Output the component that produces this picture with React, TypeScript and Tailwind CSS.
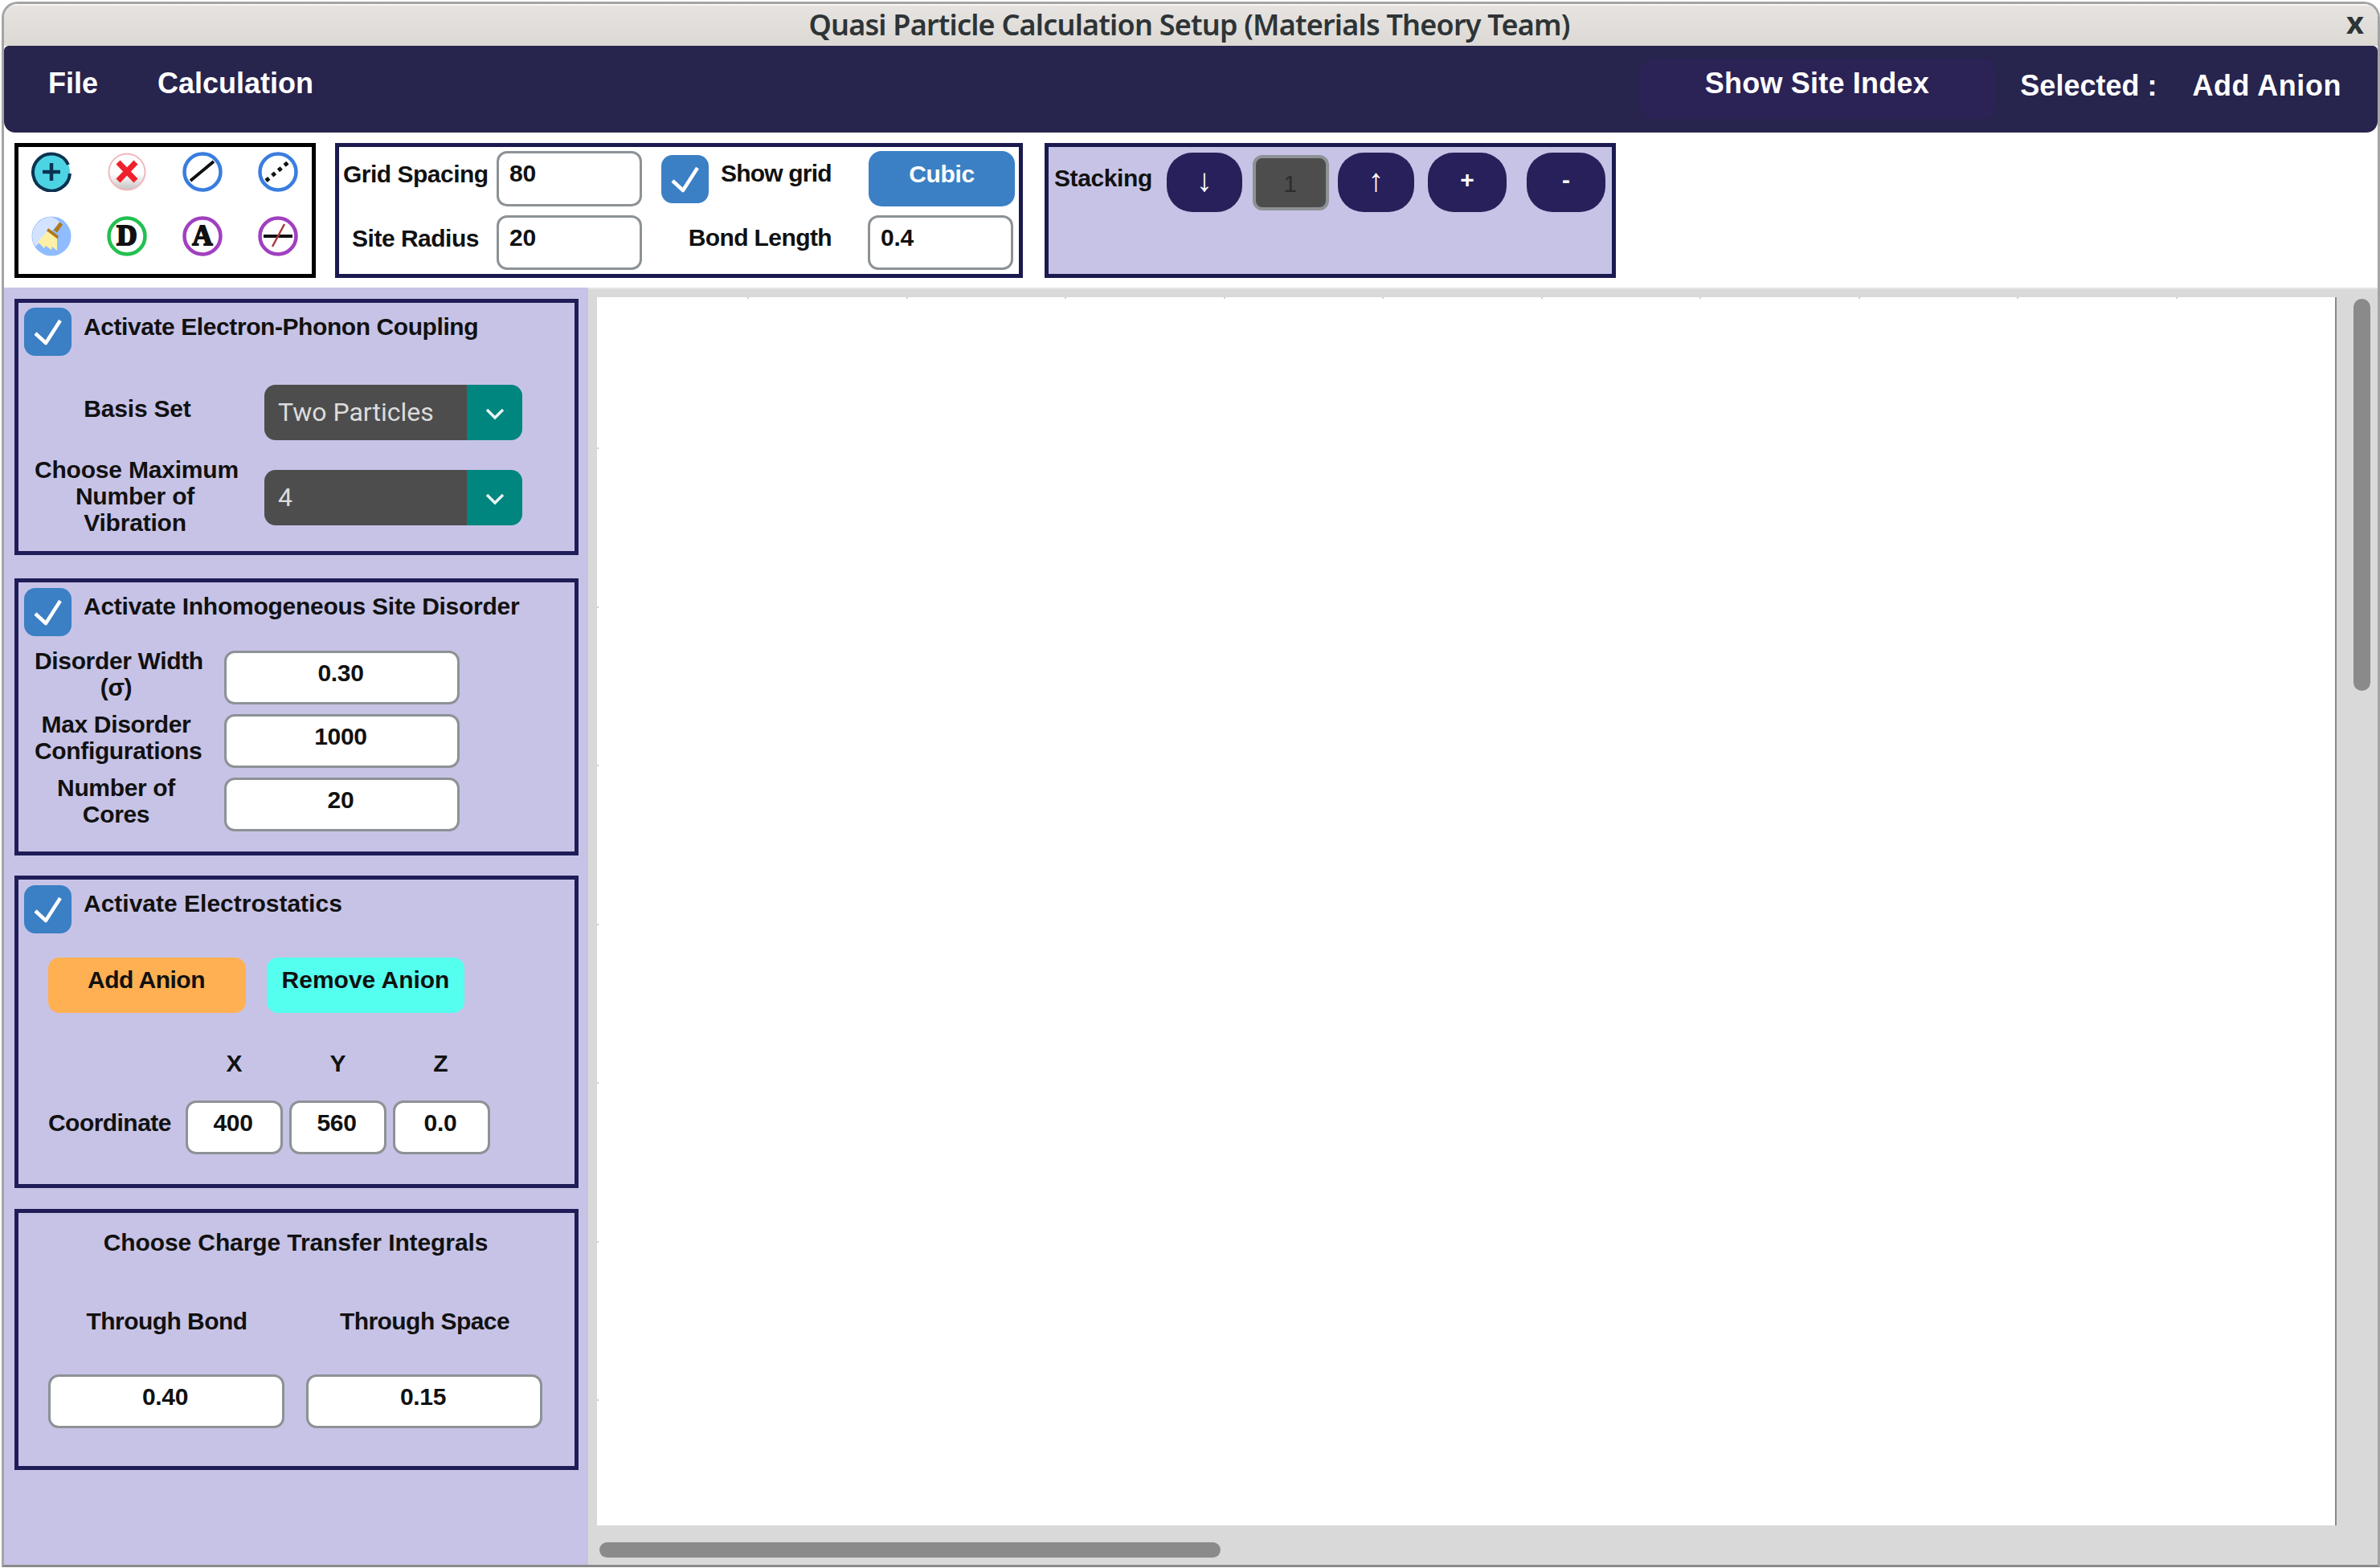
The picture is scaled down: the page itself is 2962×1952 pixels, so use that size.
import React from "react";

const SANS = "font-['Liberation_Sans',Arial,sans-serif]";
const label = "text-[30px] leading-[33px] font-bold text-[#111111] " + SANS;

function Check() {
  return (
    <div className="w-[59px] h-[60px] shrink-0 rounded-[14px] bg-[#3b7fc4] flex items-center justify-center">
      <svg width="59" height="60" viewBox="0 0 59 60">
        <path d="M14 32 L27 44 L45 16" fill="none" stroke="white" strokeWidth="4.5" strokeLinejoin="round" />
      </svg>
    </div>
  );
}

function Field({ value, w, h = "h-[67px]", align = "center" }: { value: string; w: string; h?: string; align?: string }) {
  return (
    <div
      className={
        w + " " + h +
        " shrink-0 bg-white border-[3px] border-[#8c9295] rounded-[13px] pt-[8px] text-[30px] leading-[33px] font-bold text-[#111111] tracking-[-0.3px] " +
        SANS + " " + (align === "center" ? "text-center pr-[3px]" : "text-left pl-[13px]")
      }
    >
      {value}
    </div>
  );
}

function Chevron() {
  return (
    <svg width="24" height="16" viewBox="0 0 24 16">
      <path d="M2 3 L12 13 L22 3" fill="none" stroke="#e8f4f2" strokeWidth="3.5" />
    </svg>
  );
}

function Select({ value }: { value: string }) {
  return (
    <div className="w-[321px] h-[69px] shrink-0 rounded-[14px] overflow-hidden flex">
      <div className="w-[252px] bg-[#4d4d4d] pl-[17px] text-[32px] leading-[68px] text-[#dcdcdc] font-['Roboto',sans-serif]">{value}</div>
      <div className="w-[69px] bg-[#00857f] flex items-center justify-center pt-[3px]">
        <Chevron />
      </div>
    </div>
  );
}

function Ring({ color, children }: { color: string; children: React.ReactNode }) {
  return (
    <svg width="50" height="50" viewBox="0 0 50 50">
      <circle cx="25" cy="25" r="22.5" fill="white" stroke={color} strokeWidth="4.5" />
      {children}
    </svg>
  );
}

function Icons() {
  return (
    <div className="grid grid-cols-4 w-fit gap-x-[44px] gap-y-[30px] pl-[16px] pt-[6px]">
      <svg width="50" height="50" viewBox="0 0 50 50">
        <circle cx="25" cy="25" r="23" fill="#4dd4e4" />
        <path d="M46 16 A 23 23 0 1 0 48 27" fill="none" stroke="#0b3350" strokeWidth="4" />
        <path d="M25 14 V36 M14 25 H36" stroke="#0b3350" strokeWidth="4.5" />
      </svg>
      <svg width="50" height="50" viewBox="0 0 50 50">
        <defs>
          <linearGradient id="gl" x1="0" y1="0" x2="0" y2="1">
            <stop offset="0.55" stopColor="#ffffff" />
            <stop offset="1" stopColor="#c4c0c0" />
          </linearGradient>
        </defs>
        <circle cx="25" cy="25" r="22.5" fill="url(#gl)" stroke="#f0b8bc" strokeWidth="2" />
        <path d="M14 13 L36 36 M36 13 L14 36" stroke="#f0202c" strokeWidth="7" />
      </svg>
      <Ring color="#3a7de0">
        <path d="M10 36 L39 12" stroke="#111" strokeWidth="4" />
      </Ring>
      <Ring color="#3a7de0">
        <path d="M10 36 L39 12" stroke="#111" strokeWidth="5" strokeDasharray="5 5" />
      </Ring>
      <svg width="50" height="50" viewBox="0 0 50 50">
        <circle cx="25" cy="25" r="24.5" fill="#8fbcff" />
        <path d="M25 1 A24 24 0 0 0 5 38 L36 8 A24 24 0 0 0 25 1" fill="#d3e2ff" />
        <path d="M30 19 L37 9" stroke="#b07818" strokeWidth="5" />
        <path d="M21 15 L34 25 L32 29 L19 19 Z" fill="#b07818" />
        <path d="M20 19 L32 28 L32 43 L26 38 L25 42 L18 37 L16 40 L8 32 Z" fill="#fff0a8" />
      </svg>
      <Ring color="#22c050">
        <text x="25" y="36" textAnchor="middle" fontSize="35" fontWeight="900" stroke="#111" strokeWidth="2.2" fill="#111" fontFamily="'Liberation Serif',serif">D</text>
      </Ring>
      <Ring color="#a040c0">
        <text x="25" y="36" textAnchor="middle" fontSize="35" fontWeight="900" stroke="#111" strokeWidth="1.8" fill="#111" fontFamily="'Liberation Serif',serif">A</text>
      </Ring>
      <Ring color="#a040c0">
        <path d="M7 25 H43" stroke="#111" strokeWidth="4" />
        <path d="M18 38 L33 10" stroke="#a83a3a" strokeWidth="2.5" />
      </Ring>
    </div>
  );
}

function PillBtn({ children, w, ml }: { children: React.ReactNode; w: string; ml: string }) {
  return (
    <div className={w + " " + ml + " mt-[7px] h-[74px] shrink-0 rounded-[32px] bg-[#27205a] flex items-center justify-center text-white text-[30px] leading-none pb-[6px] font-bold " + SANS}>
      {children}
    </div>
  );
}

const panel = "w-[702px] border-[5px] border-[#1f1c57] ";

const hticks = Array.from({ length: 10 }, (_, i) => 930 + i * 197.5 - 743);
const vticks = Array.from({ length: 7 }, (_, i) => 557 + i * 197.5 - 370);

export default function App() {
  return (
    <div className="w-[2962px] h-[1952px] bg-white pt-[2px] pl-[2px] pr-0 pb-[1px] overflow-hidden">
      <div className="w-full h-full rounded-t-[20px] border-[3px] border-[#a4a4a4] border-b-[#8a8a8a] overflow-hidden flex flex-col bg-white">
        {/* title bar */}
        <div className="relative h-[52px] shrink-0 bg-gradient-to-b from-[#e6e3e0] to-[#dcd9d5] border-t-[2px] border-[#f6f5f3] border-b-0 text-center pr-[4px]">
          <span className="inline-block text-[36px] leading-[48px] font-semibold tracking-[-0.8px] text-[#2e3436] font-['Noto_Sans',sans-serif]">
            Quasi Particle Calculation Setup (Materials Theory Team)
          </span>
          <span className="absolute right-[17px] top-[5px] text-[38px] leading-[30px] font-bold text-[#2e3436] font-['Noto_Sans',sans-serif]">x</span>
        </div>
        {/* menu bar */}
        <div className={"h-[108px] shrink-0 bg-[#27244d] rounded-[14px] rounded-t-[6px] flex text-white font-bold text-[36px] leading-[42px] " + SANS}>
          <div className="ml-[55px] mt-[26px]">File</div>
          <div className="ml-[74px] mt-[26px]">Calculation</div>
          <div className="flex-1" />
          <div className="mt-[16px] h-[75px] w-[443px] rounded-[16px] bg-[#2b2255] text-center pt-[10px] pr-[3px] tracking-[0.2px]">Show Site Index</div>
          <div className="ml-[30px] mt-[29px]">Selected :</div>
          <div className="ml-[44px] mr-[45px] mt-[29px] tracking-[0.55px]">Add Anion</div>
        </div>
        {/* toolbar */}
        <div className="h-[193px] shrink-0 flex items-start pt-[13px] pl-[13px] bg-white">
          <div className="w-[375px] h-[168px] border-[5px] border-black">
            <Icons />
          </div>
          <div className="ml-[24px] w-[856px] h-[168px] border-[5px] border-[#1b1a4f] bg-white flex flex-col">
            <div className="flex items-start mt-[5px]">
              <div className={"w-[180px] ml-[5px] mt-[12px] text-center whitespace-nowrap tracking-[-0.5px] " + label}>Grid Spacing</div>
              <div className="ml-[11px]"><Field value="80" w="w-[181px]" h="h-[69px]" align="left" /></div>
              <div className="ml-[24px] mt-[5px]"><Check /></div>
              <div className={"ml-[15px] w-[184px] mt-[11px] whitespace-nowrap tracking-[-0.8px] " + label}>Show grid</div>
              <div className={"w-[182px] h-[69px] rounded-[16px] bg-[#3b80c4] text-white text-center pt-[12px] tracking-[-0.4px] " + label.replace("text-[#111111]", "")}>Cubic</div>
            </div>
            <div className="flex items-start mt-[11px]">
              <div className={"w-[180px] ml-[5px] mt-[12px] text-center whitespace-nowrap tracking-[-0.5px] " + label}>Site Radius</div>
              <div className="ml-[11px]"><Field value="20" w="w-[181px]" h="h-[68px]" align="left" /></div>
              <div className={"w-[236px] text-right mt-[11px] whitespace-nowrap tracking-[-0.6px] " + label}>Bond Length</div>
              <div className="ml-[45px]"><Field value="0.4" w="w-[181px]" h="h-[68px]" align="left" /></div>
            </div>
          </div>
          <div className="ml-[27px] w-[711px] h-[168px] border-[5px] border-[#1b1a4f] bg-[#c7c3e6] flex items-start">
            <div className={"ml-[7px] mt-[22px] w-[124px] whitespace-nowrap tracking-[-0.4px] " + label}>Stacking</div>
            <PillBtn w="w-[94px]" ml="ml-[16px]"><span className="font-normal text-[40px]">↓</span></PillBtn>
            <div className="ml-[13px] mt-[10px] w-[95px] h-[69px] rounded-[12px] bg-[#4d4d4d] border-[4px] border-[#8c9295] text-center text-[30px] leading-[64px] text-[#2c2c2c] font-['Liberation_Sans',sans-serif] shrink-0 pr-[2px]">1</div>
            <PillBtn w="w-[95px]" ml="ml-[11px]"><span className="font-normal text-[40px]">↑</span></PillBtn>
            <PillBtn w="w-[98px]" ml="ml-[17px]">+</PillBtn>
            <PillBtn w="w-[98px]" ml="ml-[25px]">-</PillBtn>
          </div>
        </div>
        {/* body */}
        <div className="flex-1 flex min-h-0">
          <div className="w-[727px] shrink-0 bg-[#c7c3e6] pt-[14px] pl-[13px]">
            {/* panel 1 */}
            <div className={panel + "h-[319px]"}>
              <div className="flex items-start ml-[7px] mt-[6px]">
                <Check />
                <div className={"ml-[15px] mt-[7px] whitespace-nowrap tracking-[-0.42px] " + label}>Activate Electron-Phonon Coupling</div>
              </div>
              <div className="flex items-center mt-[36px] ml-[20px]">
                <div className={"w-[252px] text-center pb-[10px] pl-[4px] tracking-[-0.2px] " + label}>Basis Set</div>
                <div className="ml-[34px]"><Select value="Two Particles" /></div>
              </div>
              <div className="flex items-center h-[69px] mt-[37px] ml-[20px]">
                <div className={"w-[252px] text-center pb-[4px] pr-[2px] whitespace-nowrap tracking-[-0.2px] " + label}>
                  <div>Choose Maximum</div>
                  <div>Number of</div>
                  <div>Vibration</div>
                </div>
                <div className="ml-[34px]"><Select value="4" /></div>
              </div>
            </div>
            {/* panel 2 */}
            <div className={panel + "h-[345px] mt-[29px]"}>
              <div className="flex items-start ml-[7px] mt-[7px]">
                <Check />
                <div className={"ml-[15px] mt-[6px] whitespace-nowrap tracking-[-0.26px] " + label}>Activate Inhomogeneous Site Disorder</div>
              </div>
              {[
                ["Disorder Width", "(σ)", "0.30"],
                ["Max Disorder", "Configurations", "1000"],
                ["Number of", "Cores", "20"],
              ].map((r, i) => (
                <div key={i} className={"flex items-start ml-[20px] " + (i === 0 ? "mt-[18px]" : "mt-[12px]")}>
                  <div className={"w-[206px] pr-[3px] text-center -mt-[4px] whitespace-nowrap tracking-[-0.35px] " + label}>
                    <div>{r[0]}</div>
                    <div>{r[1]}</div>
                  </div>
                  <div className="ml-[30px]"><Field value={r[2]} w="w-[293px]" /></div>
                </div>
              ))}
            </div>
            {/* panel 3 */}
            <div className={panel + "h-[389px] mt-[25px]"}>
              <div className="flex items-start ml-[7px] mt-[7px]">
                <Check />
                <div className={"ml-[15px] mt-[6px] whitespace-nowrap " + label}>Activate Electrostatics</div>
              </div>
              <div className="flex ml-[37px] mt-[30px] gap-[26px]">
                <div className={"w-[246px] h-[69px] rounded-[14px] bg-[#ffb052] text-center pt-[11px] pr-[2px] tracking-[-0.5px] " + label}>Add Anion</div>
                <div className={"w-[246px] h-[69px] rounded-[14px] bg-[#55ffef] text-center pt-[11px] whitespace-nowrap " + label}>Remove Anion</div>
              </div>
              <div className={"flex ml-[208px] mt-[46px] " + label}>
                <div className="w-[121px] text-center">X</div>
                <div className="w-[121px] ml-[8px] text-center">Y</div>
                <div className="w-[121px] ml-[8px] pr-[2px] text-center">Z</div>
              </div>
              <div className="flex items-start ml-[37px] mt-[30px]">
                <div className={"w-[171px] mt-[11px] whitespace-nowrap tracking-[-0.55px] " + label}>Coordinate</div>
                <Field value="400" w="w-[121px]" />
                <div className="ml-[8px]"><Field value="560" w="w-[121px]" /></div>
                <div className="ml-[8px]"><Field value="0.0" w="w-[121px]" /></div>
              </div>
            </div>
            {/* panel 4 */}
            <div className={panel + "h-[325px] mt-[26px]"}>
              <div className={"text-center mt-[20px] pr-[2px] tracking-[-0.1px] whitespace-nowrap " + label}>Choose Charge Transfer Integrals</div>
              <div className={"flex ml-[38px] mt-[65px] gap-[29px] tracking-[-0.55px] " + label}>
                <div className="w-[293px] text-center">Through Bond</div>
                <div className="w-[293px] text-center pr-[2px]">Through Space</div>
              </div>
              <div className="flex ml-[37px] mt-[50px] gap-[27px]">
                <Field value="0.40" w="w-[294px]" />
                <Field value="0.15" w="w-[294px]" />
              </div>
            </div>
          </div>
          {/* canvas side */}
          <div className="flex-1 bg-[#d9d9d9] border-t-[2px] border-[#e4e4e4] flex flex-col min-w-0">
            <div className="flex">
              <div className="relative ml-[11px] mt-[10px] w-[2165px] h-[1529px] bg-white border-r-[2px] border-[#8a8a8a] shrink-0">
                {hticks.map((x) => (
                  <span key={x} className="absolute top-0 w-[2px] h-[2px] bg-[#cfcfcf]" style={{ left: x }} />
                ))}
                {vticks.map((y) => (
                  <span key={y} className="absolute left-0 w-[2px] h-[2px] bg-[#cfcfcf]" style={{ top: y }} />
                ))}
              </div>
              <div className="ml-[21px] mt-[12px] w-[21px] h-[488px] rounded-full bg-[#8a8a8a] shrink-0" />
            </div>
            <div className="ml-[14px] mt-[21px] w-[773px] h-[19px] rounded-full bg-[#8a8a8a]" />
          </div>
        </div>
      </div>
    </div>
  );
}
